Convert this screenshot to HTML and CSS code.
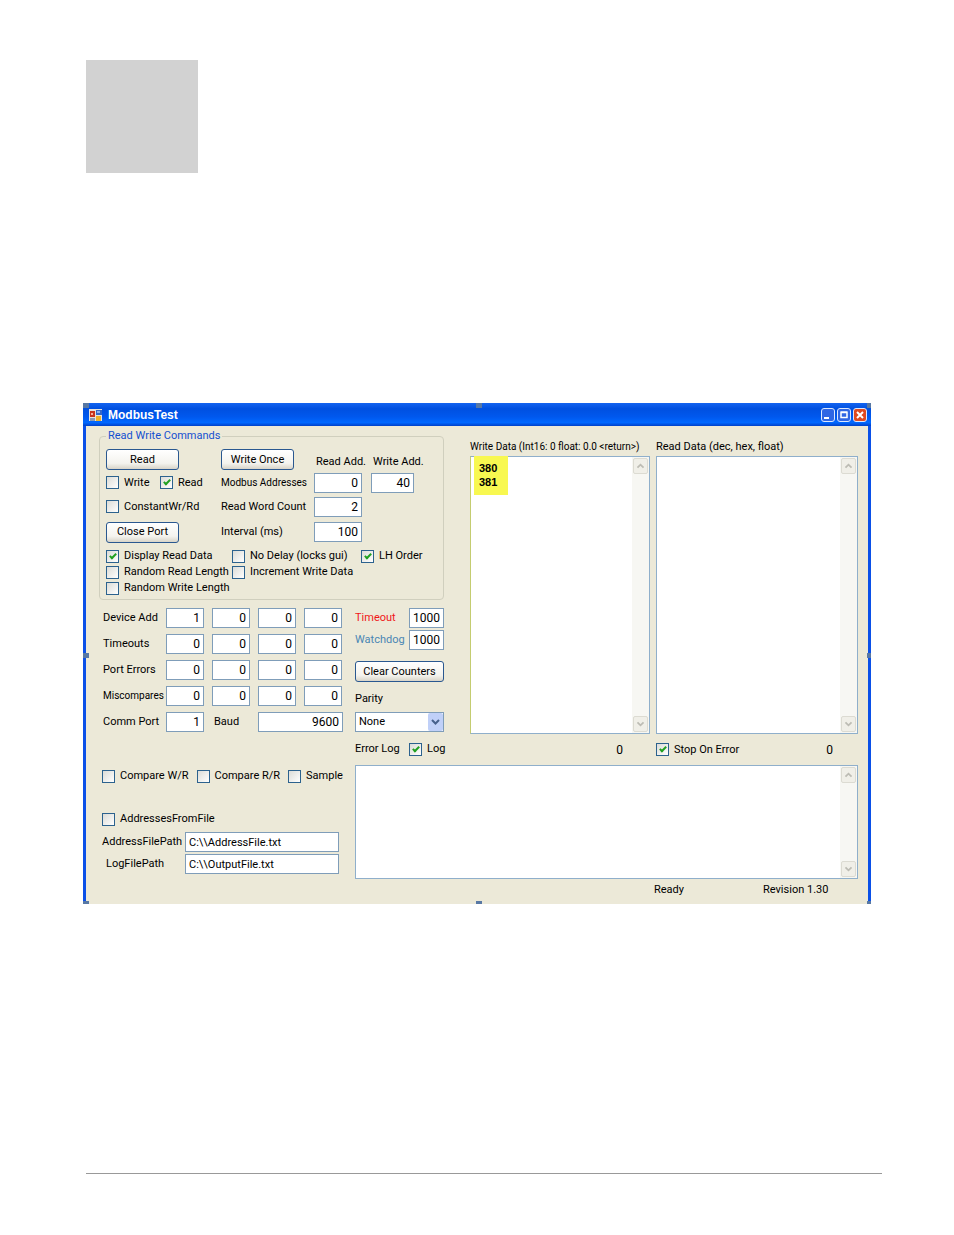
FILE: index.html
```html
<!DOCTYPE html>
<html lang="en">
<head>
<meta charset="utf-8">
<title>ModbusTest</title>
<link rel="stylesheet" href="styles.css">
</head>
<body>
<svg class="defs" aria-hidden="true">
  <symbol id="up" viewBox="0 0 15 16"><path d="M4 10l3.500-3.500L11 10" fill="none" stroke="#bdbcb4" stroke-width="2"/></symbol>
  <symbol id="down" viewBox="0 0 15 16"><path d="M4 6l3.500 3.500L11 6" fill="none" stroke="#bdbcb4" stroke-width="2"/></symbol>
</svg>
<div class="swatch"></div>
<main class="window">
  <header class="titlebar">
    <svg class="app-icon" viewBox="0 0 14 14" aria-hidden="true">
      <rect x="0" y="1" width="13" height="12" fill="#e8e4dc"/>
      <rect x="1" y="3" width="5" height="6" fill="#c8341c"/><rect x="2" y="5" width="2" height="2" fill="#f6b09c"/>
      <rect x="7" y="2" width="6" height="5" fill="#3468c8"/><rect x="8" y="3" width="3" height="2" fill="#8eb4f0"/>
      <rect x="7" y="8" width="5" height="5" fill="#f0b428"/><rect x="1" y="10" width="5" height="3" fill="#8a9ab4"/>
    </svg>
    <h1>ModbusTest</h1>
    <button class="cap" type="button" aria-label="Minimize"><svg viewBox="0 0 12 12"><rect x="2" y="8" width="5" height="2" fill="#fff"/></svg></button>
    <button class="cap" type="button" aria-label="Maximize"><svg viewBox="0 0 12 12"><path d="M3 3.500h6v5H3zM2.500 3h7" fill="none" stroke="#fff" stroke-width="1.500"/></svg></button>
    <button class="cap close" type="button" aria-label="Close"><svg viewBox="0 0 12 12"><path d="M3 3l6 6M9 3l-6 6" stroke="#fff" stroke-width="2"/></svg></button>
  </header>
  <div class="content">
    <div class="upper">
      <div class="left">
        <fieldset class="group">
          <legend>Read Write Commands</legend>
          <div class="commands">
            <div><button class="btn" type="button">Read</button></div>
            <div><button class="btn" type="button">Write Once</button></div>
            <label class="head" for="radd">Read Add.</label>
            <label class="head" for="wadd">Write Add.</label>

            <div class="pair"><label class="check"><input type="checkbox">Write</label><label class="check"><input type="checkbox" checked>Read</label></div>
            <span class="compact">Modbus Addresses</span>
            <input class="num mid" id="radd" value="0">
            <input class="num short" id="wadd" value="40">

            <label class="check"><input type="checkbox">ConstantWr/Rd</label>
            <label for="count">Read Word Count</label>
            <input class="num mid" id="count" value="2">
            <span></span>

            <div><button class="btn" type="button">Close Port</button></div>
            <label for="interval">Interval (ms)</label>
            <input class="num mid" id="interval" value="100">
          </div>
          <div class="options">
            <label class="check"><input type="checkbox" checked>Display Read Data</label>
            <label class="check"><input type="checkbox">No Delay (locks gui)</label>
            <label class="check"><input type="checkbox" checked>LH Order</label>
            <label class="check"><input type="checkbox">Random Read Length</label>
            <label class="check"><input type="checkbox">Increment Write Data</label>
            <span></span>
            <label class="check"><input type="checkbox">Random Write Length</label>
          </div>
        </fieldset>
        <div class="status">
          <div class="counters">
            <label for="d1">Device Add</label>
            <input class="num" id="d1" value="1"><input class="num" aria-label="Device 2" value="0"><input class="num" aria-label="Device 3" value="0"><input class="num" aria-label="Device 4" value="0">
            <label for="t1">Timeouts</label>
            <input class="num" id="t1" value="0"><input class="num" aria-label="Timeouts 2" value="0"><input class="num" aria-label="Timeouts 3" value="0"><input class="num" aria-label="Timeouts 4" value="0">
            <label for="p1">Port Errors</label>
            <input class="num" id="p1" value="0"><input class="num" aria-label="Port errors 2" value="0"><input class="num" aria-label="Port errors 3" value="0"><input class="num" aria-label="Port errors 4" value="0">
            <label class="compact" for="m1">Miscompares</label>
            <input class="num" id="m1" value="0"><input class="num" aria-label="Miscompares 2" value="0"><input class="num" aria-label="Miscompares 3" value="0"><input class="num" aria-label="Miscompares 4" value="0">
            <label for="comm">Comm Port</label>
            <input class="num" id="comm" value="1">
            <label class="baud" for="baud">Baud</label>
            <input class="num wide" id="baud" value="9600">
          </div>
          <div class="side">
            <div class="line"><label class="red" for="timeout">Timeout</label><input class="num" id="timeout" value="1000"></div>
            <div class="line"><label class="blue" for="watchdog">Watchdog</label><input class="num" id="watchdog" value="1000"></div>
            <button class="btn clear" type="button">Clear Counters</button>
            <label class="parity" for="parity">Parity</label>
            <div class="combo">
              <select id="parity"><option>None</option><option>Even</option><option>Odd</option></select>
              <svg viewBox="0 0 15 18" aria-hidden="true"><rect width="15" height="18" rx="2" fill="#c0d0f8"/><path d="M4 7l3.500 3.500L11 7" fill="none" stroke="#46608c" stroke-width="2"/></svg>
            </div>
            <div class="log-line"><label for="errors">Error Log</label><label class="check"><input type="checkbox" checked>Log</label></div>
          </div>
        </div>
      </div>
      <div class="right">
        <div class="pane write">
          <label class="compact" for="wdata">Write Data (Int16: 0 float: 0.0 &lt;return&gt;)</label>
          <div class="box">
            <textarea id="wdata"></textarea>
            <div class="scroll" aria-hidden="true"><svg><use href="#up"/></svg><svg><use href="#down"/></svg></div>
            <div class="mark">380<br>381</div>
          </div>
          <div class="foot"><output>0</output></div>
        </div>
        <div class="pane">
          <label for="rdata">Read Data (dec, hex, float)</label>
          <div class="box">
            <textarea id="rdata"></textarea>
            <div class="scroll" aria-hidden="true"><svg><use href="#up"/></svg><svg><use href="#down"/></svg></div>
          </div>
          <div class="foot"><label class="check"><input type="checkbox" checked>Stop On Error</label><output>0</output></div>
        </div>
      </div>
    </div>
    <div class="lower">
      <div class="files">
        <div class="compare">
          <label class="check"><input type="checkbox">Compare W/R</label>
          <label class="check"><input type="checkbox">Compare R/R</label>
          <label class="check"><input type="checkbox">Sample</label>
        </div>
        <label class="check"><input type="checkbox">AddressesFromFile</label>
        <div class="paths">
          <label for="apath">AddressFilePath</label><input class="text" id="apath" value="C:\\AddressFile.txt">
          <label class="inset" for="lpath">LogFilePath</label><input class="text" id="lpath" value="C:\\OutputFile.txt">
        </div>
      </div>
      <div class="box">
        <textarea id="errors"></textarea>
        <div class="scroll" aria-hidden="true"><svg><use href="#up"/></svg><svg><use href="#down"/></svg></div>
      </div>
    </div>
    <footer class="bar"><span>Ready</span><span>Revision 1.30</span></footer>
  </div>
  <i class="grip t l"></i><i class="grip t c"></i><i class="grip t r"></i>
  <i class="grip m l"></i><i class="grip m r"></i>
  <i class="grip b l"></i><i class="grip b c"></i><i class="grip b r"></i>
</main>
<hr class="rule">
</body>
</html>
```
FILE: styles.css
```css
* { box-sizing: border-box; }
body {
  margin: 0;
  padding: 60px 0;
  background: #fff;
  color: #000;
  font: 11px/14px "Roboto", "Liberation Sans", sans-serif;
}
input, button, select, textarea { font: inherit; color: inherit; margin: 0; }
.defs { position: absolute; width: 0; height: 0; }
.swatch { width: 112px; height: 113px; margin-left: 86px; background: #d2d2d2; }
.window {
  position: relative;
  margin: 230px 83px 0;
  min-width: 788px;
  border: solid #0a50e8;
  border-width: 0 3px;
  background: #ece9d8;
  white-space: nowrap;
}
.titlebar {
  display: flex;
  align-items: center;
  gap: 2px;
  height: 23px;
  margin: 0 -3px;
  padding: 0 4px 0 6px;
  background: linear-gradient(#1464f0, #0050e0 25%, #0058ee 60%, #0068ff 85%, #0040c8);
}
.app-icon { width: 14px; height: 14px; }
.titlebar h1 {
  flex: 1;
  margin: 0 0 0 3px;
  color: #fff;
  font: bold 12px/16px "Liberation Sans", sans-serif;
}
.cap {
  width: 14px;
  height: 14px;
  padding: 0;
  border: 1px solid #dce8ff;
  border-radius: 3px;
  background: #2f66e4;
}
.cap svg { display: block; width: 12px; height: 12px; }
.close { background: #e04a20; }
.content { padding: 4px 10px 0 13px; }
.upper { display: grid; grid-template-columns: 345px 1fr; gap: 26px; }
.group {
  margin: 0;
  padding: 6px 6px 3px;
  border: 1px solid #d0cfbe;
  border-radius: 4px;
}
.group legend { padding: 0 2px; color: #1450d0; line-height: 12px; }
.commands {
  display: grid;
  grid-template-columns: 115px 93px 57px 1fr;
  grid-template-rows: 23px 23px 25px 26px;
  align-items: center;
}
.head { padding: 4px 0 0 2px; }
.pair { display: grid; grid-template-columns: 54px 1fr; }
.btn {
  display: block;
  width: 73px;
  height: 21px;
  padding: 0;
  border: 1px solid #2a5890;
  border-radius: 3px;
  background: linear-gradient(#fff, #f4f3ee 70%, #d8d4c8);
}
.compact { font-size: 10px; }
.check { display: flex; align-items: center; gap: 5px; }
.check input {
  appearance: none;
  flex: none;
  width: 13px;
  height: 13px;
  border: 1px solid #2c628e;
  background: linear-gradient(135deg, #dcdcd7, #fff);
}
.check input:checked::before {
  content: "";
  display: block;
  width: 2px;
  height: 5px;
  margin: 1px 0 0 4px;
  border: solid #21a121;
  border-width: 0 2px 2px 0;
  box-sizing: content-box;
  rotate: 45deg;
}
.num, .text {
  width: 38px;
  height: 20px;
  padding: 0 3px;
  border: 1px solid #7f9db9;
  background: #fff;
}
.num, .foot output { font-size: 12px; }
.num { text-align: right; }
.mid { width: 48px; }
.short { width: 43px; }
.options {
  display: grid;
  grid-template-columns: 126px 129px 1fr;
  grid-auto-rows: 16px;
  margin-top: 3px;
}
.status { display: flex; gap: 12px; padding: 8px 0 9px 4px; }
.counters {
  display: grid;
  grid-template-columns: 63px 46px 46px 46px 39px;
  grid-auto-rows: 20px;
  row-gap: 6px;
  align-items: center;
}
.counters .baud { padding-left: 2px; }
.counters .wide { grid-column: 4 / 6; width: auto; }
.side { flex: 1; min-width: 0; display: flex; flex-direction: column; }
.line { display: flex; justify-content: space-between; align-items: center; margin-bottom: 2px; }
.line .num { width: 35px; }
.red { color: #f01818; }
.blue { color: #4a86b4; }
.clear { width: 100%; margin-top: 9px; }
.parity { margin: 10px 0 6px; }
.combo { position: relative; }
.combo select {
  appearance: none;
  display: block;
  width: 100%;
  height: 20px;
  padding: 0 3px;
  border: 1px solid #7f9db9;
  border-radius: 0;
  background: #fff;
}
.combo svg { position: absolute; top: 1px; right: 1px; width: 15px; height: 18px; pointer-events: none; }
.log-line { display: grid; grid-template-columns: 54px 1fr; align-items: center; margin-top: 10px; }
.right { display: flex; gap: 6px; padding-top: 10px; min-width: 0; }
.pane { flex: 1; min-width: 0; display: flex; flex-direction: column; }
.write { flex: 0 0 180px; }
.box { position: relative; display: flex; border: 1px solid #8fafcb; background: #fff; }
.pane .box { flex: 1; margin-top: 2px; }
.write .box { border-left-color: #c4cc70; }
.box textarea { flex: 1; min-width: 0; padding: 3px; border: 0; resize: none; background: none; outline: 0; }
.scroll {
  display: flex;
  flex-direction: column;
  justify-content: space-between;
  width: 17px;
  padding: 1px;
  background: #f7f7f3;
}
.scroll svg { width: 15px; height: 16px; border: 1px solid #dcdbd2; border-radius: 2px; background: #f0efe8; }
.mark {
  position: absolute;
  top: -1px;
  left: 3px;
  padding: 5px 11px 6px 5px;
  background: #f8f850;
  color: #000;
  font: bold 11px/14px "Liberation Sans", sans-serif;
}
.foot { display: flex; align-items: center; justify-content: space-between; height: 31px; padding-right: 25px; }
.write .foot { justify-content: flex-end; padding-right: 27px; }
.lower { display: grid; grid-template-columns: 244px 1fr; gap: 12px; }
.files { padding: 4px 0 5px 3px; }
.compare { display: flex; gap: 8px; margin-bottom: 29px; }
.paths {
  display: grid;
  grid-template-columns: 83px 1fr;
  row-gap: 2px;
  align-items: center;
  margin: 6px 4px 0 0;
}
.text { width: 100%; }
.inset { padding-left: 4px; }
.bar { display: grid; grid-template-columns: 1fr 95px; gap: 14px; padding: 4px 0 7px 555px; }
.grip { position: absolute; width: 6px; height: 5px; background: #5878a4; }
.t { top: 0; }
.m { top: 250px; }
.b { bottom: 0; height: 3px; }
.l { left: -3px; }
.c { left: 390px; }
.r { right: -3px; width: 4px; }
.rule { margin: 269px 72px 0 86px; border: 0; border-top: 1px solid #999; }
```
